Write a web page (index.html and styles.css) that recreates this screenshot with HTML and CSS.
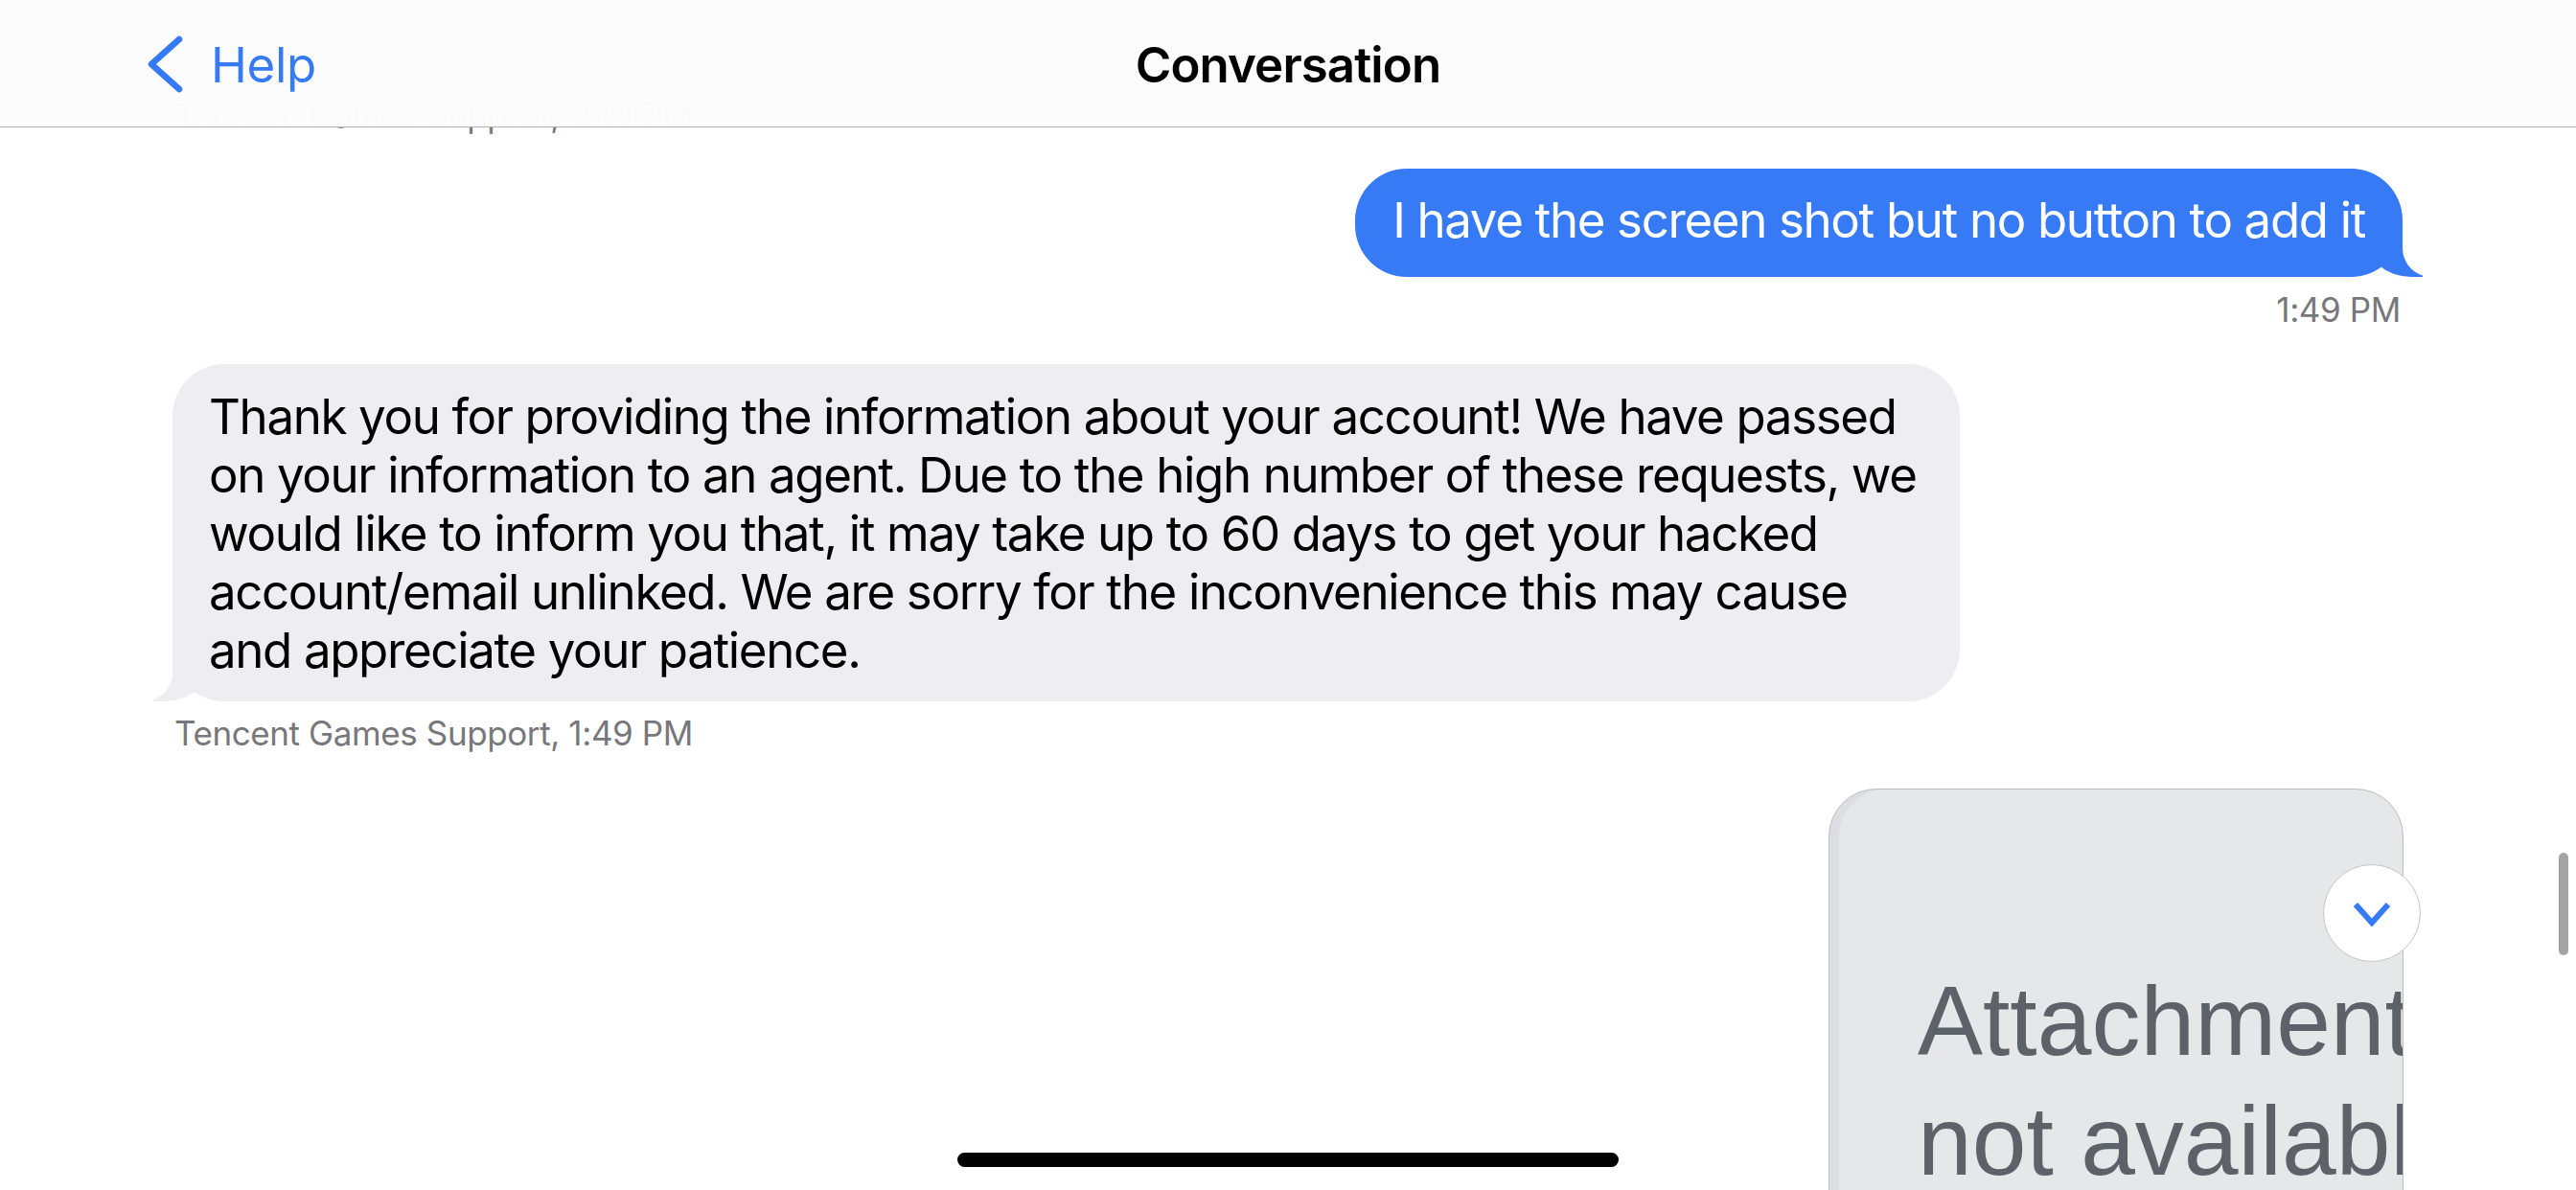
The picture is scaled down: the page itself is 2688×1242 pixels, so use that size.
FILE: index.html
```html
<!DOCTYPE html>
<html lang="en">
<head>
<meta charset="utf-8">
<title>Conversation</title>
<link rel="stylesheet" href="styles.css">
</head>
<body>
<div class="screen">
  <header class="navbar">
    <div class="nav-left">
      <svg class="back-chevron" width="40" height="60" viewBox="0 0 40 60" aria-hidden="true">
        <path d="M33 4 L4 30 L33 56" fill="none" stroke="#377AF5" stroke-width="6.5" stroke-linecap="round" stroke-linejoin="round"/>
      </svg>
      <span class="back-label">Help</span>
    </div>
    <div class="nav-title">Conversation</div>
    <div class="nav-right"></div>
  </header>

  <main class="chat">
    <div class="meta meta-left meta-top">Tencent Games Support, 1:49 PM</div>

    <div class="row row-out row-first">
      <div class="bubble bubble-out">I have the screen shot but no button to add it</div>
    </div>
    <div class="meta meta-right">1:49 PM</div>

    <div class="row row-in">
      <div class="bubble bubble-in">Thank you for providing the information about your account! We have passed<br>on your information to an agent. Due to the high number of these requests, we<br>would like to inform you that, it may take up to 60 days to get your hacked<br>account/email unlinked. We are sorry for the inconvenience this may cause<br>and appreciate your patience.</div>
    </div>
    <div class="meta meta-left meta-sender">Tencent Games Support, 1:49 PM</div>

    <div class="row row-out row-attachment">
      <div class="attachment">
        <div class="attachment-text">Attachment<br>not available</div>
      </div>
    </div>
  </main>

  <button class="scroll-down" aria-label="Scroll to bottom">
    <svg width="44" height="30" viewBox="0 0 44 30" aria-hidden="true">
      <path d="M5 5 L22 24 L39 5" fill="none" stroke="#377AF5" stroke-width="6" stroke-linecap="butt" stroke-linejoin="miter"/>
    </svg>
  </button>
  <div class="scroll-indicator"></div>
  <div class="home-indicator"></div>
</div>
</body>
</html>
```
FILE: styles.css
```css
html, body {
  margin: 0;
  padding: 0;
  background: #ffffff;
}

body {
  font-family: "Inter", "Noto Sans", "Liberation Sans", sans-serif;
  color: #000;
  overflow: hidden;
}

.screen {
  position: relative;
  width: 2688px;
  height: 1242px;
  overflow: hidden;
  background: #ffffff;
}

/* ---------- Navigation bar (floats over content) ---------- */
.navbar {
  position: absolute;
  top: 0;
  left: 0;
  right: 0;
  height: 133px;
  z-index: 5;
  display: grid;
  grid-template-columns: 1fr auto 1fr;
  align-items: center;
  padding: 0 154px;
  box-sizing: border-box;
  background: rgba(252, 252, 252, 0.985);
  border-bottom: 1.5px solid #b2b2b2;
}

.nav-left {
  display: flex;
  align-items: center;
  gap: 26px;
  padding-top: 2px;
}

.back-chevron {
  display: block;
}

.back-label {
  font-size: 51px;
  letter-spacing: -0.3px;
  color: #377AF5;
  line-height: 1;
}

.nav-title {
  font-size: 51px;
  font-weight: 600;
  letter-spacing: -0.9px;
  line-height: 1;
  padding-top: 2px;
}

/* ---------- Chat ---------- */
.chat {
  display: flex;
  flex-direction: column;
  padding: 99px 180px 0 180px;
}

.meta {
  font-size: 35px;
  line-height: 42px;
  color: #77777c;
  letter-spacing: -0.4px;
  white-space: nowrap;
}

.meta-left {
  align-self: flex-start;
  padding-left: 2px;
}

.meta-right {
  align-self: flex-end;
  margin-top: 13px;
  margin-right: 3px;
}

.meta-sender {
  margin-top: 12px;
}

.row {
  display: flex;
}

.row-out {
  justify-content: flex-end;
}

.row-in {
  justify-content: flex-start;
  margin-top: 36px;
}

.row-first {
  margin-top: 35px;
}

.row-attachment {
  margin-top: 37px;
}

.bubble {
  position: relative;
  font-size: 51px;
  line-height: 61px;
  letter-spacing: -1.35px;
  border-radius: 54px;
  white-space: nowrap;
}

.bubble-out {
  background: #377AF5;
  color: #ffffff;
  padding: 23px 39px 29px 39px;
  margin-right: 1px;
}

.bubble-in {
  background: #EDEDF2;
  color: #000000;
  padding: 24px 45px 23px 38px;
}

/* iMessage-style tails */
.bubble-out::before,
.bubble-out::after,
.bubble-in::before,
.bubble-in::after {
  content: "";
  position: absolute;
  bottom: 0;
  height: 60px;
}

.bubble-out::before {
  right: -21px;
  width: 60px;
  background: #377AF5;
  border-bottom-left-radius: 48px 42px;
}

.bubble-out::after {
  right: -78px;
  width: 78px;
  background: #ffffff;
  border-bottom-left-radius: 30px;
}

.bubble-in::before {
  left: -20px;
  width: 60px;
  background: #EDEDF2;
  border-bottom-right-radius: 48px 42px;
}

.bubble-in::after {
  left: -78px;
  width: 78px;
  background: #ffffff;
  border-bottom-right-radius: 30px;
}

/* ---------- Attachment placeholder ---------- */
.attachment {
  width: 600px;
  height: 600px;
  box-sizing: border-box;
  border: 1.5px solid #bcbcbe;
  border-radius: 50px 50px 0 0;
  background: #E6E7E9;
  box-shadow: inset 10px 0 0 0 #DDDEE1;
  overflow: hidden;
}

.attachment-text {
  font-family: "Liberation Sans", Arial, sans-serif;
  font-size: 102px;
  line-height: 125px;
  color: #5C6268;
  white-space: nowrap;
  padding: 180px 0 0 92px;
}

/* ---------- Overlays ---------- */
.scroll-down {
  position: absolute;
  left: 2424px;
  top: 902px;
  width: 102px;
  height: 102px;
  border-radius: 50%;
  background: #ffffff;
  border: 1.5px solid #c4c4c6;
  display: flex;
  align-items: center;
  justify-content: center;
  padding: 2px 0 0 0;
  box-sizing: border-box;
  z-index: 4;
}

.scroll-indicator {
  position: absolute;
  left: 2670px;
  top: 890px;
  width: 10px;
  height: 107px;
  border-radius: 5px;
  background: #a3a3a3;
  z-index: 4;
}

.home-indicator {
  position: absolute;
  left: 999px;
  top: 1203px;
  width: 690px;
  height: 15px;
  border-radius: 8px;
  background: #000000;
  z-index: 6;
}
```
